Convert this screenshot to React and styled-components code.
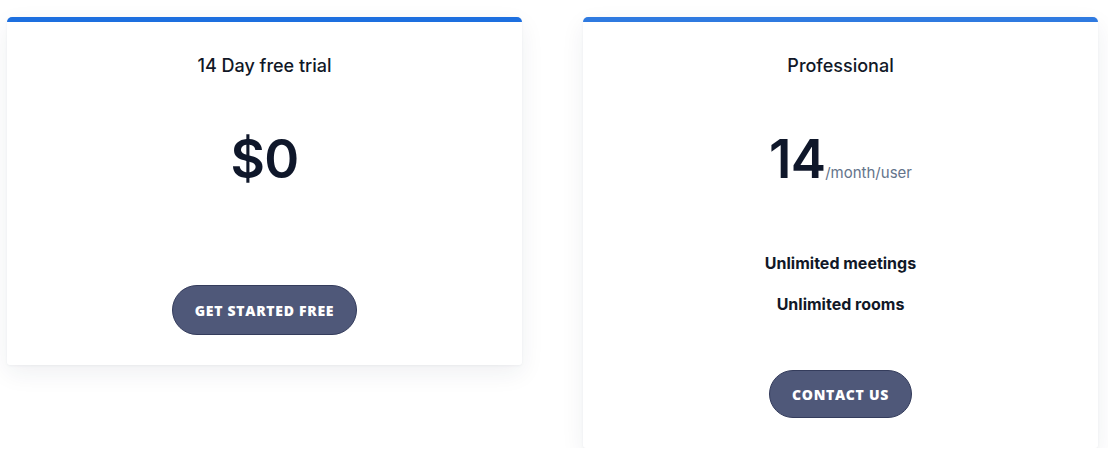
import React from "react";
import styled, { createGlobalStyle } from "styled-components";

const GlobalStyle = createGlobalStyle`
  body {
    margin: 0;
    background: #ffffff;
    font-family: Inter, "Noto Sans", sans-serif;
  }
`;

const Page = styled.div`
  display: flex;
  align-items: flex-start;
  gap: 61px;
  padding: 17px 10px 0 7px;
`;

const Card = styled.div`
  width: 515px;
  background: #ffffff;
  border-top: 5px solid ${(p) => p.$accent};
  border-radius: 5px 5px 3px 3px;
  box-shadow: 0 8px 24px rgba(30, 41, 70, 0.07), 0 1px 3px rgba(30, 41, 70, 0.05);
  display: flex;
  flex-direction: column;
  align-items: center;
  padding: 30px 0 30px;
`;

const Title = styled.h3`
  margin: 0;
  font-size: 18px;
  line-height: 28px;
  font-weight: 500;
  color: #111827;
`;

const PriceRow = styled.div`
  margin-top: 53px;
  display: flex;
  align-items: baseline;
  color: #0f172a;
`;

const Amount = styled.span`
  font-size: 53px;
  line-height: 52px;
  font-weight: 600;
  letter-spacing: -0.8px;
`;

const Period = styled.span`
  font-size: 15px;
  color: #64748b;
`;

const Features = styled.ul`
  list-style: none;
  margin: 0;
  padding: ${(p) => (p.$empty ? "57px 0 43px" : "58px 0 45px")};
  text-align: center;
`;

const Feature = styled.li`
  font-size: 16px;
  line-height: 41px;
  font-weight: 700;
  color: #111827;
`;

const ActionButton = styled.button`
  height: ${(p) => (p.$tall ? "50px" : "48px")};
  padding: 0 22px;
  border-radius: 25px;
  border: 1px solid #343c5c;
  background: #4f5879;
  color: #ffffff;
  font-family: "Open Sans", sans-serif;
  font-size: 14px;
  font-weight: 800;
  letter-spacing: 0.7px;
  text-transform: uppercase;
  cursor: pointer;
`;

const plans = [
  {
    title: "14 Day free trial",
    amount: "$0",
    features: [],
    action: "Get started free",
    accent: "#1d6fdf",
  },
  {
    title: "Professional",
    amount: "14",
    period: "/month/user",
    features: ["Unlimited meetings", "Unlimited rooms"],
    action: "Contact us",
    accent: "#2f7ae0",
  },
];

export default function App() {
  return (
    <>
      <GlobalStyle />
      <Page>
        {plans.map((plan) => (
          <Card key={plan.title} $accent={plan.accent}>
            <Title>{plan.title}</Title>
            <PriceRow>
              <Amount>{plan.amount}</Amount>
              {plan.period && <Period>{plan.period}</Period>}
            </PriceRow>
            <Features $empty={plan.features.length === 0}>
              {plan.features.map((f) => (
                <Feature key={f}>{f}</Feature>
              ))}
            </Features>
            <ActionButton $tall={plan.features.length === 0}>{plan.action}</ActionButton>
          </Card>
        ))}
      </Page>
    </>
  );
}
